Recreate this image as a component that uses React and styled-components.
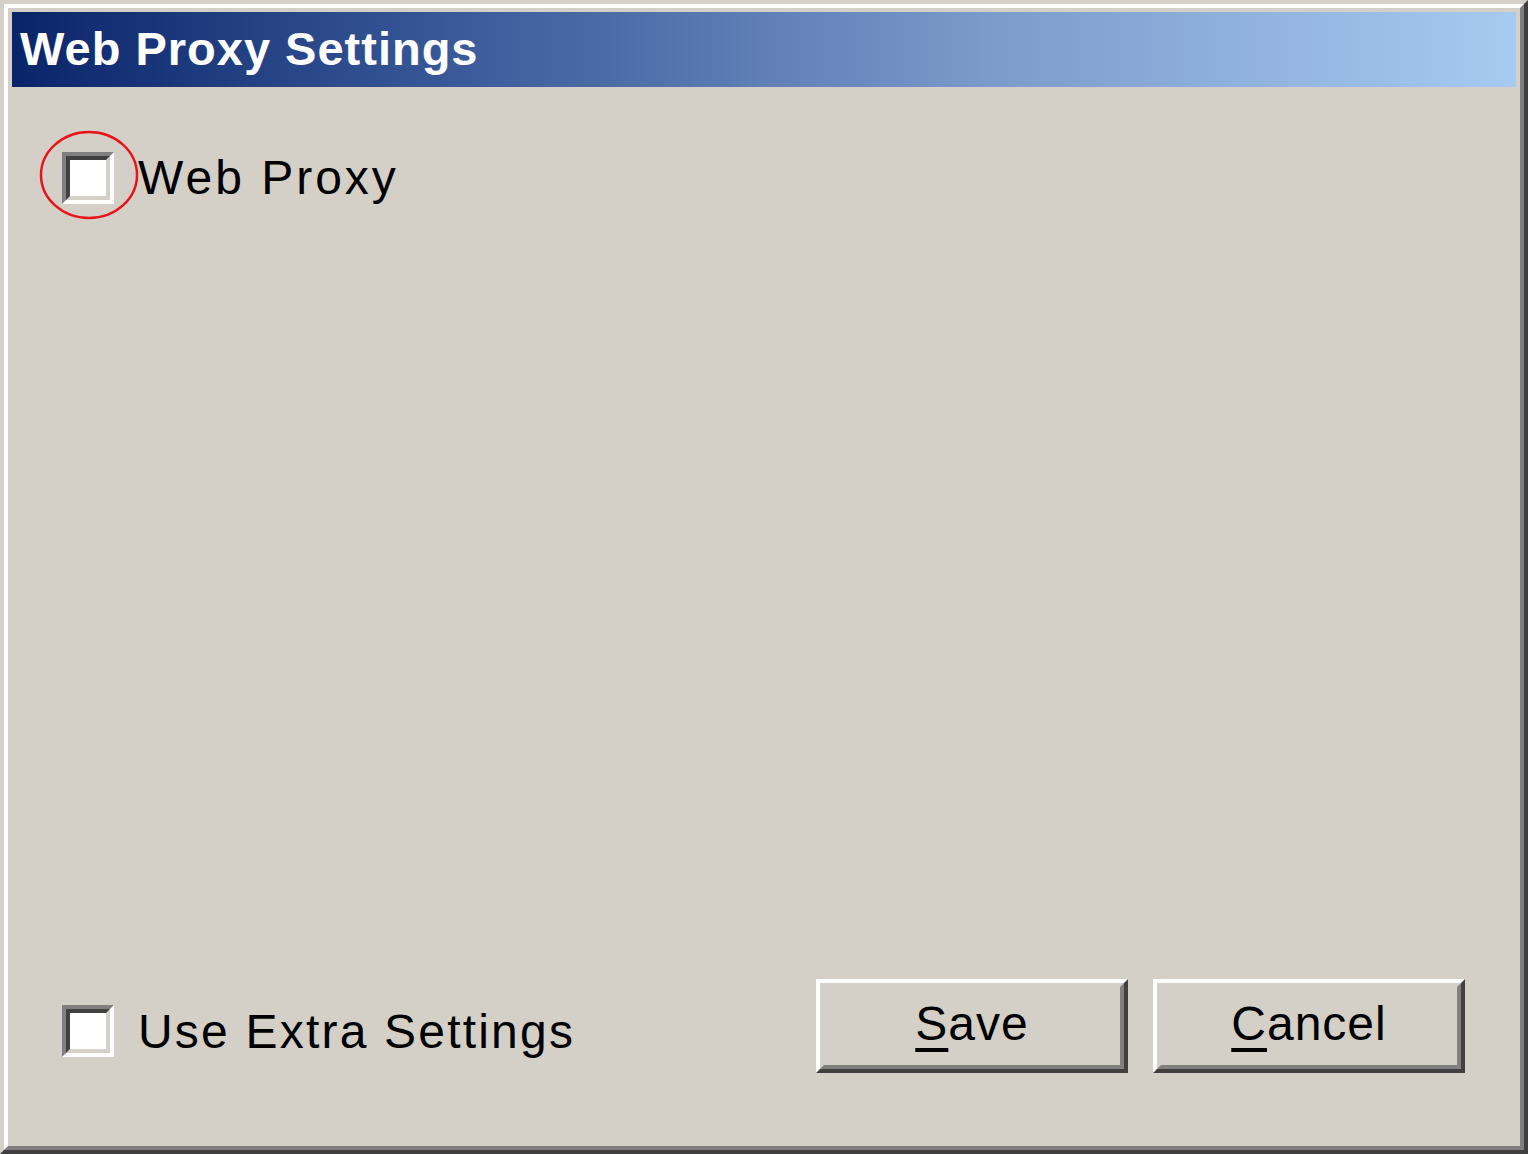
import React from 'react';
import styled, { createGlobalStyle } from 'styled-components';

const GlobalStyle = createGlobalStyle`
    html, body {
        margin: 0;
        padding: 0;
        background: #d4d0c8;
    }
    * {
        box-sizing: border-box;
    }
`

const Window = styled.div`
    width: 1528px;
    height: 1154px;
    border-style: solid;
    border-width: 4px;
    border-color: #d4d0c8 #404040 #404040 #d4d0c8;
    background: #d4d0c8;
`

const Frame = styled.div`
    height: 100%;
    border-style: solid;
    border-width: 4px;
    border-color: #ffffff #808080 #808080 #ffffff;
    padding: 4px;
    display: flex;
    flex-direction: column;
`

const TitleBar = styled.div`
    height: 75px;
    flex-shrink: 0;
    display: flex;
    align-items: center;
    padding-left: 8px;
    background: linear-gradient(to right, #0a246a 0%, #3a5a9a 30%, #7b9bcc 65%, #a6caf0 100%);
`

const Title = styled.span`
    font-family: "Liberation Sans", Arial, sans-serif;
    font-weight: bold;
    font-size: 47px;
    color: #ffffff;
    letter-spacing: 1px;
    margin-top: -2px;
`

const Body = styled.div`
    flex: 1;
    display: flex;
    flex-direction: column;
    justify-content: space-between;
    padding: 63px 51px 69px 50px;
`

const Row = styled.div`
    display: flex;
    align-items: center;
    justify-content: space-between;
`

const CheckRow = styled.label`
    position: relative;
    display: flex;
    align-items: center;
    gap: ${props => props.gap}px;
    font-family: "Liberation Sans", Arial, sans-serif;
    font-size: 48px;
    color: #000000;
    letter-spacing: ${props => props.spacing}px;
`

const Box = styled.span`
    width: 52px;
    height: 52px;
    border-style: solid;
    border-width: 4px;
    border-color: #808080 #ffffff #ffffff #808080;
    display: inline-block;
    flex-shrink: 0;
`

const BoxInner = styled.span`
    display: block;
    width: 100%;
    height: 100%;
    border-style: solid;
    border-width: 4px;
    border-color: #404040 #d4d0c8 #d4d0c8 #404040;
    background: #ffffff;
`

const Highlight = styled.svg`
    position: absolute;
    left: -23px;
    top: -20px;
    width: 100px;
    height: 90px;
    pointer-events: none;
`

const Buttons = styled.div`
    display: flex;
    gap: 25px;
    margin-top: -10px;
`

const Button = styled.button`
    width: 312px;
    height: 94px;
    padding: 0;
    border-style: solid;
    border-width: 4px;
    border-color: #ffffff #404040 #404040 #ffffff;
    background: #d4d0c8;
    font-family: "Liberation Sans", Arial, sans-serif;
    font-size: 48px;
    color: #000000;
    letter-spacing: 1px;
`

const ButtonFace = styled.span`
    display: flex;
    align-items: center;
    justify-content: center;
    width: 100%;
    height: 100%;
    border-style: solid;
    border-width: 4px;
    border-color: #d4d0c8 #808080 #808080 #d4d0c8;
    padding-bottom: 6px;
    u {
        text-decoration-thickness: 4px;
        text-underline-offset: 8px;
    }
`

const Checkbox = ({ label, gap, spacing, marked }) => (
    <CheckRow gap={gap} spacing={spacing}>
        <Box><BoxInner /></Box>
        <span>{label}</span>
        {marked && (
            <Highlight viewBox="0 0 100 90">
                <ellipse cx="50" cy="45" rx="48" ry="43" fill="none" stroke="#e8141c" strokeWidth="2.5" />
            </Highlight>
        )}
    </CheckRow>
)

const App = () => {
    return (
        <>
            <GlobalStyle />
            <Window>
                <Frame>
                    <TitleBar>
                        <Title>Web Proxy Settings</Title>
                    </TitleBar>
                    <Body>
                        <Row>
                            <Checkbox label="Web Proxy" gap={24} spacing={3} marked />
                        </Row>
                        <Row>
                            <Checkbox label="Use Extra Settings" gap={24} spacing={2.2} />
                            <Buttons>
                                <Button><ButtonFace><u>S</u>ave</ButtonFace></Button>
                                <Button><ButtonFace><u>C</u>ancel</ButtonFace></Button>
                            </Buttons>
                        </Row>
                    </Body>
                </Frame>
            </Window>
        </>
    );
}

export default App;
